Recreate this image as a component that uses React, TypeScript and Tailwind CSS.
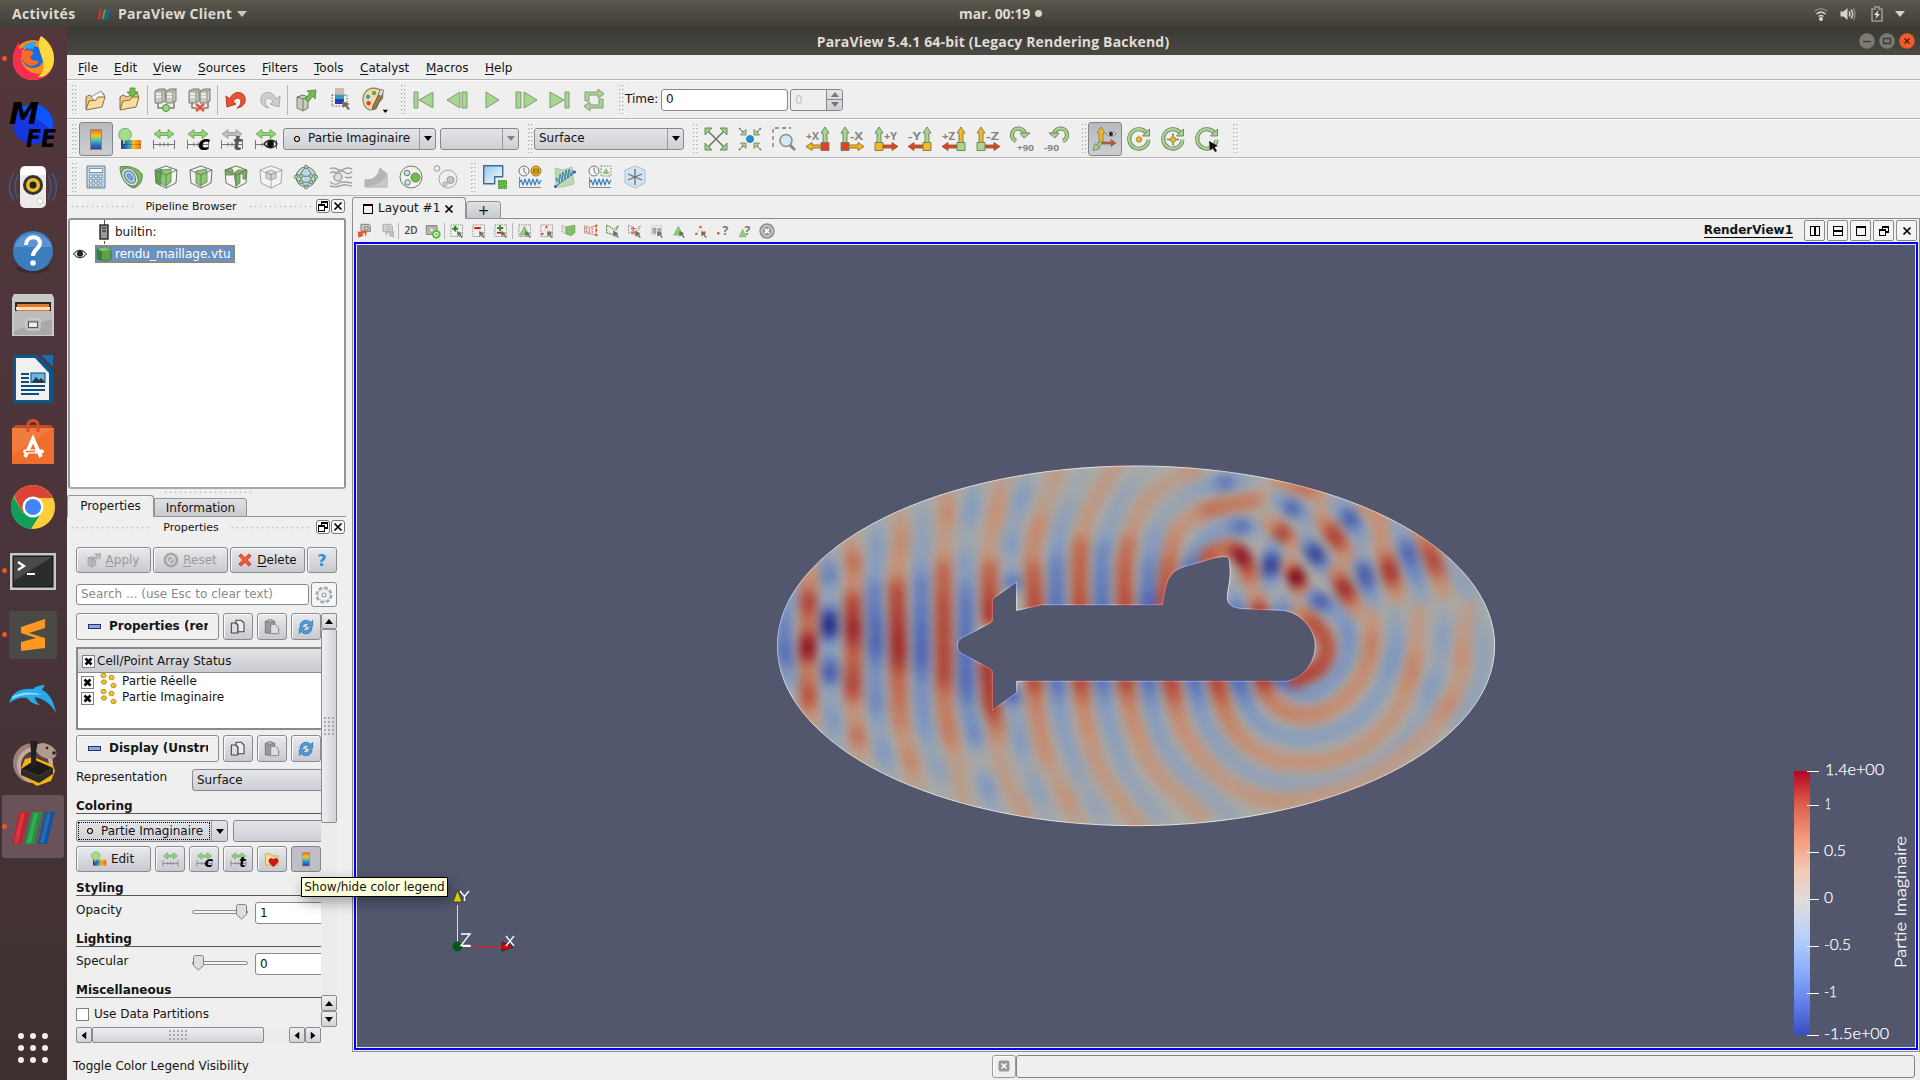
import React from "react";

type Kids = { children?: React.ReactNode };
const G = "#a6d68f";
const D = "#6d7c5c";
const BTN =
  "flex shrink-0 items-center justify-center rounded-[3px] border border-[#8b8c90] bg-linear-to-b from-[#e9eaed] to-[#c9cad1] shadow-[inset_1px_1px_0_#fafafa]";

/* ---------- wave field ---------- */

type Crest = [number, number, number][];

const crests: Crest[] = [
  [[95, 400, -0.2], [80, 470, -0.45], [72, 540, -0.6], [74, 610, -0.7], [90, 690, -0.4]],
  [[160, 340, 0.2], [148, 400, 0.5], [145, 455, 0.85], [145, 520, 0.6], [143, 595, 1.15], [143, 660, 0.55], [145, 740, 0.75], [155, 810, 0.3]],
  [[205, 290, -0.1], [208, 375, -0.6], [211, 440, -0.25], [208, 525, -1.25], [210, 595, -0.35], [210, 668, -0.85], [213, 735, -0.25], [218, 810, -0.45], [228, 880, -0.15]],
  [[268, 250, 0.1], [280, 330, 0.6], [280, 400, 0.45], [278, 460, 0.8], [280, 540, 1], [280, 620, 0.7], [278, 710, 0.82], [284, 790, 0.35], [292, 860, 0.6], [308, 930, 0.15]],
  [[348, 200, -0.1], [352, 290, -0.4], [345, 360, -0.35], [342, 430, -0.6], [347, 570, -0.75], [345, 680, -0.5], [348, 760, -0.55], [358, 840, -0.25], [370, 905, -0.45], [390, 980, -0.1]],
  [[418, 170, 0.1], [424, 265, 0.45], [412, 350, 0.4], [411, 440, 0.8], [415, 595, 0.98], [415, 700, 0.65], [420, 800, 0.55], [434, 870, 0.35], [450, 930, 0.5], [475, 1010, 0.15]],
  [[482, 150, -0.1], [490, 230, -0.25], [484, 310, -0.3], [483, 420, -0.6], [484, 600, -0.75], [486, 730, -0.5], [494, 830, -0.45], [514, 900, -0.2], [532, 950, -0.3], [560, 1030, -0.05]],
  [[560, 120, 0.2], [560, 190, 0.45], [552, 270, 0.25], [550, 380, 0.68], [550, 500, 0.78], [552, 660, 0.82], [554, 760, 0.55], [568, 850, 0.55], [590, 930, 0.25], [605, 1020, 0.22], [620, 1080, 0.2]],
  [[645, 90, -0.1], [634, 175, -0.4], [618, 265, -0.12], [618, 350, -0.4], [618, 480, -0.65], [618, 690, -0.72], [628, 790, -0.5], [645, 860, -0.55], [655, 930, -0.05], [680, 1012, -0.45], [705, 1080, -0.15]],
  [[730, 80, 0.2], [708, 190, 0.4], [690, 280, 0.25], [688, 380, 0.7], [690, 500, 0.9]],
  [[682, 650, 0.9], [694, 770, 0.85], [710, 825, 0.6], [715, 910, 0.25], [745, 1000, 0.25], [790, 1090, 0.3]],
  [[805, 70, -0.1], [787, 145, -0.4], [762, 220, -0.2], [752, 285, -0.4], [752, 340, -0.15], [757, 400, -0.7]],
  [[755, 735, -0.8], [766, 790, -0.3], [780, 875, -0.4], [800, 950, -0.15], [830, 1018, -0.3], [870, 1100, -0.1]],
  [[888, 70, 0.25], [860, 150, 0.18], [836, 225, 0.45], [818, 300, 0.45], [820, 380, 0.7], [826, 480, 0.8]],
  [[822, 680, 0.85], [829, 780, 0.5], [855, 905, 0.42], [885, 980, 0.2], [918, 1040, 0.38], [950, 1110, 0.2]],
  [[985, 50, -0.05], [950, 120, -0.1], [920, 185, -0.25], [895, 260, -0.35], [889, 360, -0.6], [890, 480, -0.7]],
  [[890, 680, -0.7], [905, 820, -0.35], [940, 930, -0.28], [975, 1010, -0.15], [1010, 1070, -0.25], [1035, 1120, -0.1]],
  [[1070, 40, 0.25], [1010, 140, 0.28], [975, 220, 0.3], [960, 300, 0.65], [958, 400, 0.7], [960, 480, 0.8]],
  [[960, 680, 0.85], [975, 800, 0.45], [1005, 920, 0.33], [1050, 1010, 0.28], [1100, 1080, 0.28], [1140, 1130, 0.28]],
  [[1165, 50, -0.05], [1090, 140, -0.2], [1052, 230, -0.26], [1028, 310, -0.55], [1025, 480, -0.7]],
  [[1025, 680, -0.7], [1045, 810, -0.35], [1080, 920, -0.26], [1125, 1010, -0.2], [1190, 1090, -0.2]],
  [[1300, 62, 0.35], [1240, 90, 0.2], [1175, 135, 0.28], [1125, 215, 0.3], [1100, 300, 0.62], [1093, 380, 0.7], [1095, 480, 0.8]],
  [[1095, 680, 0.85], [1115, 800, 0.45], [1165, 930, 0.33], [1240, 1020, 0.28], [1320, 1090, 0.28]],
  [[1163, 480, -0.8], [1165, 380, -0.6], [1180, 270, -0.4], [1210, 200, -0.16], [1260, 150, -0.18], [1330, 110, -0.3], [1397, 97, -0.65], [1460, 90, -0.2]],
  [[1163, 680, -0.7], [1190, 830, -0.35], [1250, 940, -0.26], [1330, 1020, -0.22], [1410, 1090, -0.2]],
  [[1215, 460, 0.8], [1222, 380, 0.7], [1240, 270, 0.48], [1280, 210, 0.3], [1350, 178, 0.6], [1420, 162, 0.55], [1490, 150, 0.52], [1520, 130, 0.1]],
  [[1230, 680, 0.85], [1265, 830, 0.42], [1340, 940, 0.33], [1420, 1010, 0.28], [1530, 1052, 0.35], [1660, 1040, 0.28], [1790, 1000, 0.25], [1920, 920, 0.26], [2010, 840, 0.26], [2060, 770, 0.45], [2100, 690, 0.28], [2106, 620, 0.42], [2112, 540, 0.25], [2125, 470, 0.2]],
  [[1290, 360, -0.7], [1320, 280, -0.4], [1380, 238, -0.4], [1450, 228, -0.7], [1485, 240, -0.3]],
  [[1300, 680, -0.7], [1340, 830, -0.36], [1420, 930, -0.26], [1510, 985, -0.24], [1640, 1005, -0.24], [1780, 975, -0.2], [1910, 900, -0.25], [1980, 800, -0.2], [2015, 710, -0.4], [2040, 640, -0.2], [2045, 560, -0.35], [2050, 470, -0.1]],
  [[1335, 330, 0.75], [1390, 290, 0.6], [1448, 318, 1.15], [1465, 370, 0.7], [1482, 420, 0.3], [1500, 490, 0.95]],
  [[1367, 680, 0.85], [1410, 820, 0.48], [1500, 910, 0.38], [1630, 940, 0.36], [1780, 905, 0.33], [1900, 800, 0.33], [1960, 650, 0.5], [1968, 570, 0.28], [1975, 490, 0.26]],
  [[1425, 420, -0.2], [1428, 480, -0.7]],
  [[1432, 680, -0.75], [1480, 800, -0.42], [1550, 850, -0.35], [1633, 865, -0.33], [1760, 830, -0.33], [1850, 740, -0.33], [1903, 610, -0.45], [1905, 500, -0.22]],
  [[1500, 670, 0.95], [1540, 760, 0.52], [1633, 798, 0.48], [1730, 765, 0.43], [1805, 680, 0.43], [1835, 580, 0.52], [1832, 490, 0.28]],
  [[1560, 490, -0.6], [1572, 465, -0.5]],
  [[1560, 680, -0.75], [1633, 735, -0.45], [1710, 700, -0.42], [1760, 620, -0.45], [1765, 550, -0.5], [1735, 490, -0.4], [1677, 452, -0.8], [1645, 430, -0.4]],
  [[1590, 470, 0.3], [1660, 520, 0.75], [1698, 570, 0.75], [1698, 620, 0.75], [1670, 660, 0.82], [1600, 690, 0.82]],
  [[1542, 290, -0.4], [1532, 345, -1.1], [1528, 400, -0.4]],
  [[1560, 150, -0.4], [1595, 173, -0.75], [1640, 205, -0.35]],
  [[1635, 270, -0.4], [1665, 312, -1.05], [1700, 360, -0.4]],
  [[1730, 160, -0.3], [1770, 205, -0.8], [1805, 260, -0.35]],
  [[1795, 310, -0.3], [1815, 375, -0.85], [1840, 450, -0.35]],
  [[1915, 230, -0.25], [1945, 310, -0.75], [1965, 370, -0.55], [1985, 440, -0.25]],
  [[2070, 350, -0.25], [2110, 400, -0.3], [2150, 450, -0.15]],
  [[2150, 480, -0.12], [2170, 600, -0.25], [2160, 700, -0.25], [2100, 810, -0.22]],
  [[1530, 220, 0.4], [1567, 248, 0.85], [1600, 280, 0.4]],
  [[1590, 345, 0.5], [1609, 382, 1.5], [1625, 420, 0.5]],
  [[1680, 200, 0.4], [1725, 260, 0.85], [1765, 320, 0.4]],
  [[1725, 360, 0.45], [1752, 415, 0.98], [1790, 480, 0.4]],
  [[1560, 90, 0.4], [1640, 115, 0.6], [1700, 150, 0.2]],
  [[1820, 165, 0.45], [1855, 205, 0.4], [1865, 280, 0.4], [1890, 365, 0.92], [1910, 430, 0.45]],
  [[1980, 240, 0.45], [2020, 330, 0.8], [2050, 420, 0.35]],
];

const stops: [number, number[]][] = [
  [-1, [38, 50, 140]],
  [-0.6, [80, 106, 184]],
  [-0.3, [130, 154, 192]],
  [0, [171, 171, 166]],
  [0.3, [198, 143, 116]],
  [0.6, [190, 88, 62]],
  [1, [140, 8, 26]],
];

function shade(v: number) {
  const m = Math.abs(v);
  const gain = m < 0.5 ? 0.74 : Math.min(0.87, 0.74 + (m - 0.5) * 0.5);
  const a = Math.max(-1.1, Math.min(1.1, v * gain));
  let i = 0;
  while (i < stops.length - 2 && a > stops[i + 1][0]) i++;
  const [p, c] = stops[i];
  const [q, d] = stops[i + 1];
  const t = (a - p) / (q - p);
  return `rgb(${c.map((n, k) => Math.max(0, Math.round(n + (d[k] - n) * t))).join(",")})`;
}

/* Each crest fades out past both of its ends. */
function withTails(c: Crest): Crest {
  const tail = (a: number[], b: number[]): [number, number, number] => {
    const l = Math.hypot(a[0] - b[0], a[1] - b[1]) || 1;
    return [a[0] + ((a[0] - b[0]) / l) * 38, a[1] + ((a[1] - b[1]) / l) * 38, a[2] * 0.15];
  };
  return [tail(c[0], c[1]), ...c, tail(c[c.length - 1], c[c.length - 2])];
}

function sample(c: Crest) {
  const out: number[][] = [];
  for (let i = 0; i < c.length - 1; i++) {
    const p0 = c[Math.max(0, i - 1)], p1 = c[i], p2 = c[i + 1], p3 = c[Math.min(c.length - 1, i + 2)];
    const n = Math.max(3, Math.round(Math.hypot(p2[0] - p1[0], p2[1] - p1[1]) / 9));
    for (let s = 0; s < n; s++) {
      const t = s / n;
      const cr = [0, 1].map(
        (k) => 0.5 * (2 * p1[k] + (p2[k] - p0[k]) * t + (2 * p0[k] - 5 * p1[k] + 4 * p2[k] - p3[k]) * t * t + (3 * p1[k] - p0[k] - 3 * p2[k] + p3[k]) * t * t * t),
      );
      const e = (1 - Math.cos(Math.PI * t)) / 2;
      out.push([cr[0], cr[1], p1[2] + (p2[2] - p1[2]) * e]);
    }
  }
  out.push([...c[c.length - 1]]);
  return out;
}

const segments = crests
  .flatMap((c) => {
    const p = sample(withTails(c));
    return p.slice(1).map((q, i) => ({ d: `M${p[i][0].toFixed(1)} ${p[i][1].toFixed(1)}L${q[0].toFixed(1)} ${q[1].toFixed(1)}`, a: (p[i][2] + q[2]) / 2 }));
  })
  .sort((m, n) => Math.abs(m.a) - Math.abs(n.a));

const HULL =
  "M592 587C593 572 598 567 612 560L645 543L690 519L697 513V447L770 395V481L845 464H1207C1212 430 1217 400 1228 382C1240 362 1255 355 1285 346C1330 336 1365 317 1402 320C1410 325 1410 350 1411 370C1410 400 1402 420 1402 445C1403 465 1420 474 1450 476L1570 481C1625 488 1666 540 1666 587C1666 640 1625 690 1575 694H770V728L697 781V663L690 656L645 632L612 614C598 607 593 602 592 587Z";

function Field() {
  return (
    <g transform="translate(760 450) scale(.33333)">
      <defs>
        <filter id="soft" x="0" y="0" width="2280" height="1170" filterUnits="userSpaceOnUse" colorInterpolationFilters="sRGB">
          <feGaussianBlur stdDeviation="15" />
        </filter>
        <filter id="lift" x="0" y="0" width="2280" height="1170" filterUnits="userSpaceOnUse" colorInterpolationFilters="sRGB">
          <feColorMatrix values="1.3 0 0 0 .02 0 1.3 0 0 .02 0 0 1.3 0 .05 0 0 0 1 0" />
        </filter>
        <clipPath id="ell"><ellipse cx="1128" cy="587.5" rx="1076" ry="539.5" /></clipPath>
        <mask id="rim" maskUnits="userSpaceOnUse" x="0" y="0" width="2280" height="1170">
          <g fill="none" stroke="#fff" strokeWidth="3"><ellipse cx="1128" cy="587.5" rx="1076" ry="539.5" /><path d={HULL} /></g>
        </mask>
        <g id="waves">
          <g filter="url(#soft)">
            <rect x="-40" y="-40" width="2360" height="1250" fill="#ababa6" />
            <g fill="none" strokeWidth="52">
              {segments.map((s, i) => <path key={i} d={s.d} stroke={shade(s.a)} />)}
            </g>
          </g>
        </g>
      </defs>
      <g clipPath="url(#ell)"><use href="#waves" /></g>
      <path d={HULL} fill="#52576e" />
      <g mask="url(#rim)"><g filter="url(#lift)"><use href="#waves" /></g></g>
    </g>
  );
}

const ticks: [number, number, string][] = [
  [771, 1825, "1.4e+00"], [805, 1825, "1"], [852, 1824, "0.5"], [899, 1824, "0"], [946, 1824, "-0.5"], [993, 1824, "-1"], [1035, 1824, "-1.5e+00"],
];
const tickLen = [59, 6, 22, 9, 27, 13, 65];

function Viewport() {
  return (
    <svg viewBox="357 245 1558 802" className="block h-[802px] w-[1558px] bg-[#52576e]">
      <Field />
      <g>
        <path d="M457.500 942V905" stroke="#f5f520" strokeWidth="1" />
        <path d="M457.500 890L462 902H453Z" fill="#d8d800" stroke="#222" strokeWidth=".7" />
        <path d="M462 946.500H503" stroke="#ff1010" />
        <path d="M462 946.500H471" stroke="#fff" />
        <path d="M502 942L514 946.500L502 951Z" fill="#e00000" stroke="#222" strokeWidth=".8" />
        <circle cx="457.500" cy="946.500" r="5" fill="#005a10" />
        <g fill="none" stroke="#fff" strokeWidth="1.400">
          <path d="M460 891L464.500 896.500L469 891M464.500 896.500V901" />
          <path d="M461 934H470L461 945.500H470.500" />
          <path d="M506 936L514 946M514 936L506 946" />
        </g>
      </g>
      <defs>
        <linearGradient id="cw" x1="0" y1="0" x2="0" y2="1">
          <stop offset="0" stopColor="#b40426" /><stop offset=".125" stopColor="#dc5d4a" /><stop offset=".25" stopColor="#f4987a" />
          <stop offset=".375" stopColor="#f2cab5" /><stop offset=".5" stopColor="#dcdddd" /><stop offset=".625" stopColor="#b8d0f9" />
          <stop offset=".75" stopColor="#8db0fe" /><stop offset=".875" stopColor="#6282ea" /><stop offset="1" stopColor="#3b4cc0" />
        </linearGradient>
      </defs>
      <rect x="1794" y="771" width="16" height="264" fill="url(#cw)" />
      <g fill="#fff" stroke="#fff" strokeWidth=".25" fontFamily="Lato, sans-serif" fontSize="16" fontWeight="300">
        {ticks.map(([y, x, t], i) => (
          <g key={t}>
            <rect x="1807" y={y} width="12" height="1" stroke="none" />
            <text x={x} y={y + 4} textLength={tickLen[i]} lengthAdjust="spacingAndGlyphs">{t}</text>
          </g>
        ))}
        <text transform="translate(1906 968) rotate(-90)" fontSize="16.500" textLength="132" lengthAdjust="spacingAndGlyphs">Partie Imaginaire</text>
      </g>
    </svg>
  );
}

/* ---------- icons ---------- */

function Svg({ s = 24, children }: Kids & { s?: number }) {
  return (
    <svg width={s} height={s} viewBox="0 0 24 24" fill="none" strokeLinejoin="round" className="block shrink-0 overflow-visible">
      {children}
    </svg>
  );
}

const Folder = ({ save }: { save?: boolean }) => (
  <Svg>
    <path d="M2 21V9l3-2 4 2 8-4 3 1v4z" fill="#e8c987" stroke="#8a6d3b" />
    {!save && <path d="M7 9l10-6 4 6-9 5z" fill="#fafafa" stroke="#777" strokeWidth=".8" />}
    <path d="M2 22l3-9 7-1 2-3h7l-3 10z" fill="#f8dca0" stroke="#8a6d3b" />
    {save && <path d="M12 0h5v4h3l-5.500 5L9 4h3z" fill="#6cc04a" stroke="#4d8a35" strokeWidth=".8" />}
  </Svg>
);
const Server = ({ off }: { off?: boolean }) => (
  <Svg>
    <path d="M4 13v7h5M20 13v7h-5" stroke="#7d8070" strokeWidth="1.500" />
    {[1, 12].map((x) => (
      <g key={x}>
        <path d={`M${x} 3l4-2h6v12l-4 2H${x}z`} fill="#c9c9c4" stroke="#77786c" />
        <path d={`M${x} 3h7v12M${x + 7} 3l4-2`} stroke="#8d8e84" strokeWidth=".8" />
        <path d={`M${x + 1} 6h5M${x + 1} 9h5`} stroke="#f4f4f0" strokeWidth="1.400" />
      </g>
    ))}
    {off ? <path d="M8 16l8 7M16 16l-8 7" stroke="#e2553f" strokeWidth="2.600" /> : <circle cx="12" cy="20" r="3.500" fill="#8fdc78" stroke="#5c8a4a" />}
  </Svg>
);
const Undo = ({ redo }: { redo?: boolean }) => (
  <Svg>
    <path
      transform={redo ? "translate(24 0) scale(-1 1)" : ""}
      d="M2 8l1 11 9-3-3-2c2-5 7-5 8-1 0 3-1 5-4 7 6-1 9-5 8-10C20 3 9 2 6 11z"
      fill={redo ? "#cfcfcf" : "#ee5030"} stroke={redo ? "#aaa" : "#b43a20"}
    />
  </Svg>
);
const Cube = ({ fill, grey, kind = 0 }: { fill?: string; grey?: boolean; kind?: number }) => {
  const k = grey ? "#a4a4a4" : "#6a7860";
  return (
    <Svg>
      <path d="M1 5l11-4 11 4-1 13-10 5-10-5z" stroke={k} fill="#f4f4f2" />
      {kind === 0 && <path d="M2 6l6-2v14l-2 2-4-2z" fill={fill} stroke={k} strokeWidth=".8" />}
      {kind === 0 && <path d="M8 5l9-1v13l-5 4-6-3z" fill="#8cc873" stroke={k} strokeWidth=".8" />}
      {kind === 1 && <path d="M7 6l10-2 1 3v10l-7 4-4-3z" fill={fill} stroke={k} strokeWidth=".8" />}
      {kind === 2 && <path d="M10 8l4-3h8v9h-3V9h-3v9l-4 3z M2 5l5-2 2 2v5H2z" fill={fill} stroke={k} strokeWidth=".8" />}
      {kind === 3 && <path d="M7 7l5-2 5 2v6l-5 2-5-2z M7 7l5 2 5-2M12 9v6" fill={fill} stroke={k} />}
      <path d="M1 5l11 5 11-5M12 10v13" stroke={k} strokeWidth=".9" />
    </Svg>
  );
};
const ExtractSel = ({ grey, s = 24 }: { grey?: boolean; s?: number }) => (
  <Svg s={s}>
    <path d="M3 9l6-2 5 2v11l-5 3-6-3z" fill={grey ? "#bbb" : "#c6cdbf"} stroke={grey ? "#999" : D} />
    <path d="M3 9l6 2 5-2M9 11v11" stroke={grey ? "#999" : D} />
    <path d="M11 11l5-6-3-2 9-1-1 9-2-3-5 6z" fill={grey ? "#bbb" : "#6cc04a"} stroke={grey ? "#999" : "#4f8040"} strokeWidth=".8" />
  </Svg>
);
const Rainbow = () => (
  <defs>
    <linearGradient id="rbv" x1="0" y1="0" x2="0" y2="1"><stop offset="0" stopColor="#f06a20" /><stop offset=".3" stopColor="#f9c31f" /><stop offset=".5" stopColor="#62c7a8" /><stop offset=".75" stopColor="#1e7ed0" /><stop offset="1" stopColor="#4a2a8a" /></linearGradient>
    <linearGradient id="rbh" x1="0" y1="0" x2="1" y2="0"><stop offset="0" stopColor="#4a2a8a" /><stop offset=".35" stopColor="#1e8ed8" /><stop offset=".6" stopColor="#f9c31f" /><stop offset="1" stopColor="#f0701c" /></linearGradient>
    <linearGradient id="sky" x1="0" y1="0" x2="1" y2="1"><stop offset="0" stopColor="#8fc4e8" /><stop offset="1" stopColor="#fff" /></linearGradient>
  </defs>
);
const LoadColor = () => (
  <Svg>
    <path d="M7 0h9v7H7z" fill="#c9bdb0" />
    <rect x="4" y="7" width="15" height="11" stroke="#555" strokeDasharray="1.500 1.500" />
    <rect x="7" y="7" width="9" height="9" fill="#2aa0c8" /><rect x="7" y="11" width="9" height="5" fill="#2a3aa8" />
    <path d="M14 13l8 3-3 1 3 4-2 1-3-4-2 2z" fill="#6b705c" />
  </Svg>
);
const Palette = () => (
  <Svg s={26}>
    <path d="M12 1C4 1 1 8 2 14c1 5 5 8 8 7 2-1 0-5 3-6 4-1 8-3 7-8-1-4-4-6-8-6z" fill="#f5d9a8" stroke="#8a7a55" />
    <circle cx="6.500" cy="9" r="2" fill="#2e9be0" /><circle cx="12" cy="5.500" r="2" fill="#5fae3c" /><circle cx="7" cy="15" r="2" fill="#e23b2a" />
    <path d="M11 18l6-13 3-2v4l-6 13-3 1z" fill="#a0784a" stroke="#555" strokeWidth=".8" />
    <path d="M16 7l2-5 3 1-2 6z" fill="#ddd" stroke="#666" strokeWidth=".7" />
    <path d="M20 21h5l-2.500 3z" fill="#000" />
  </Svg>
);
const Play = ({ k }: { k: number }) => (
  <Svg>
    <g fill={G} stroke="#849a74">
      {k === 0 && <path d="M2 4h4v16H2zM21 4v16L7 12z" />}
      {k === 1 && <path d="M14 4v16L1 12zM16 4h5v16h-5z" />}
      {k === 2 && <path d="M6 4l13 8-13 8z" />}
      {k === 3 && <path d="M10 4v16l13-8zM2 4h5v16H2z" />}
      {k === 4 && <path d="M2 4v16l14-8zM17 4h4v16h-4z" />}
      {k === 5 && <path d="M3 13V4h13V1l6 5-6 4V7H7v6zM21 11v9H8v3l-6-5 6-4v3h9v-6z" />}
    </g>
  </Svg>
);
const Legend = ({ s = 24 }: { s?: number }) => (
  <Svg s={s}><rect x="6.500" y="2.500" width="11" height="20" fill="url(#rbv)" stroke="#8a8a8a" /></Svg>
);
const EditMap = ({ s = 24 }: { s?: number }) => (
  <Svg s={s}>
    <rect x="3" y="13" width="20" height="9" fill="url(#rbh)" /><circle cx="7" cy="7.500" r="6.300" fill="#a3dc8c" stroke="#7aa868" /><path d="M6 13v4" stroke="#8fc27a" strokeWidth="2" />
    <path d="M3 17.500h20M13 13v9" stroke="#0003" />
  </Svg>
);
const Rescale = ({ k, s = 24, grey }: { k: string; s?: number; grey?: boolean }) => (
  <Svg s={s}>
    <path d="M1 17.500h22M1.500 13v9M22.500 13v9M8 15.500v4M12 15.500v4M16 15.500v4" stroke="#777" />
    <path d="M2 7l6-4.500v3h8v-3L22 7l-6 4.500v-3H8v3z" fill={grey ? "#bdbdbd" : "#8fd674"} stroke={grey ? "#999" : "#6d9a58"} strokeWidth=".8" />
    {(k === "c" || k === "t") && (
      <text x={k === "c" ? 12 : 13} y="22.500" fontSize="20" fontWeight="bold" fontStyle="italic" fontFamily="DejaVu Sans, sans-serif" fill={grey ? "#555" : "#000"} textLength={k === "c" ? 12 : 9} lengthAdjust="spacingAndGlyphs">{k}</text>
    )}
    {k === "e" && <g><path d="M10 17c4-5 10-5 13 0-3 5-9 5-13 0z" fill="#eee" stroke="#222" strokeWidth="1.400" /><circle cx="16.500" cy="17" r="3.400" fill="#111" /></g>}
  </Svg>
);
const Calc = () => (
  <Svg>
    <rect x="3" y="1" width="18" height="22" fill="#b9d8ee" stroke="#6d8190" /><rect x="5.500" y="3.500" width="13" height="4" fill="#fff" stroke="#6d8190" strokeWidth=".8" />
    {[10, 14.500, 19].map((y) => [5.500, 10.300, 15].map((x) => <rect key={`${x}${y}`} x={x} y={y} width="3" height="2.600" fill="#fff" stroke="#6d8190" strokeWidth=".8" />))}
  </Svg>
);
const Contour = () => (
  <Svg>
    <path d="M1 2c8-2 18 1 22 7 1 6-2 12-8 14C8 22 1 12 1 2z" fill="#77c05a" stroke={D} />
    <ellipse cx="11" cy="12" rx="7" ry="10" transform="rotate(-38 11 12)" fill="#d8e8d0" stroke={D} />
    <ellipse cx="11" cy="12" rx="4.600" ry="7" transform="rotate(-38 11 12)" fill="#aacdec" stroke="#56779a" />
    <ellipse cx="11" cy="12" rx="1.800" ry="3.500" transform="rotate(-38 11 12)" fill="#7aa4dc" stroke="#56779a" strokeWidth=".8" />
  </Svg>
);
const Glyph = () => (
  <Svg>
    <circle cx="12" cy="12" r="10" fill="#b9d8f0" stroke={D} />
    <path d="M12 2c-7 6-7 14 0 20 7-6 7-14 0-20M2.500 9c6 3 13 3 19 0M2.500 15c6 3 13 3 19 0" stroke={D} fill="none" />
    {[[12, 2], [2, 12], [22, 12], [12, 22], [7, 11], [17, 11], [7, 17], [17, 17]].map(([x, y]) => <circle key={`${x}-${y}`} cx={x} cy={y} r="1.800" fill={G} stroke={D} strokeWidth=".8" />)}
  </Svg>
);
const Stream = () => (
  <Svg><g stroke="#a3a3a3" strokeWidth="1.500"><path d="M1 4c5-4 8 3 12 1s6-3 10-1M1 8c4-3 6 1 8-1s6-1 8 1 4 0 6-1M1 17c4 3 6 3 9 1s8-1 13 0M1 21c5 2 10 0 13-1s6 1 9 1M16 12c2 1 4 1 7 0" /><circle cx="9" cy="12" r="4" fill="#ddd" /></g></Svg>
);
const Warp = () => <Svg><path d="M1 22v-7c8 0 13-3 15-12l7 6v13z" fill="#c9c9c9" stroke="#b0b0b0" /><path d="M1 15c8 0 13-3 15-12l7 6c-2 6-8 11-22 13z" fill="#b5b5b5" /></Svg>;
const Group = ({ ex }: { ex?: boolean }) => (
  <Svg>
    <circle cx={ex ? 14 : 12} cy={ex ? 14 : 12} r={ex ? 9 : 11} fill={ex ? "#eee" : "#f2f2ee"} stroke={ex ? "#a5a5a5" : D} />
    <circle cx="16.500" cy={ex ? 15 : 12.500} r={ex ? 3.500 : 4.500} fill={ex ? "#c4c4c4" : "#6cc04a"} stroke={ex ? "#999" : D} />
    <circle cx={ex ? 3 : 8} cy={ex ? 3.500 : 8} r="2.800" fill={ex ? "#eee" : "#c5e0f4"} stroke={ex ? "#999" : D} />
    <circle cx={ex ? 11 : 8.500} cy={ex ? 19 : 17.500} r={ex ? 2 : 2.800} fill={ex ? "#ddd" : "#c5e0f4"} stroke={ex ? "#999" : D} />
  </Svg>
);
const SelQuery = () => (
  <Svg><path d="M.7.700h19v11h-8v7h-11z" fill="url(#sky)" stroke="#3f6a94" strokeWidth="1.400" /><rect x="15.500" y="15.500" width="8" height="8" fill="#5cbb3c" stroke="#4b7a3c" strokeDasharray="1.500 1" /></Svg>
);
const Wave = "M1 18l2-3 2 5 2-6 2 6 2-6 2 6 2-6 2 6 2-6 2 5 2-4";
const PlotTime = ({ sel }: { sel?: boolean }) => (
  <Svg>
    <circle cx="6" cy="6" r="5" fill="#f4f8fa" stroke={D} /><path d="M6 2.500V6l2 3" stroke={D} />
    {sel ? <g><rect x="13" y="1" width="10" height="10" stroke={D} strokeDasharray="1.500 1.500" /><path d="M18 3l3.500 6h-7z" fill="#8cc873" /></g> : <g><circle cx="18" cy="6" r="5" fill="#f5b91c" stroke="#8b7430" /><path d="M15.500 4h5v4h-5zM15.500 6h5" stroke="#8b6914" /></g>}
    <path d={Wave} stroke="#3c7fc0" strokeWidth="1.200" /><path d="M1.500 12v10.500H23" stroke="#888" />
  </Svg>
);
const PlotLine = () => <Svg><path d="M2 3l8 2 9-3 2 17-12 3H3z" fill="#b9d9ae" stroke="#b0c8a8" /><path d="M2 22L22 7" stroke="#3c6fb0" /><path d="M3 16l1-3 2 5 1-9 2 7 1-9 2 7 1-9 2 8 1-9 2 7 2-6" stroke="#3c7fc0" /><circle cx="2.500" cy="21.500" r="1.500" fill="#2860a8" /><circle cx="21.500" cy="7" r="1.500" fill="#2860a8" /></Svg>;
const Probe = () => <Svg><path d="M2 5l10-4 10 4v13l-10 5-10-5z" fill="#d3e3f1" stroke="#a9c0d4" /><path d="M12 4v16M5 9l14 6M19 9L5 15" stroke="#6a6f72" strokeWidth="1.300" /></Svg>;

const ResetCam = () => (
  <Svg><path d="M4 4l16 16M20 4L4 20" stroke="#707a5c" strokeWidth="1.600" /><path d="M1 1h7l-7 7zM23 1v7l-7-7zM1 23v-7l7 7zM23 23h-7l7-7z" fill="#8fd674" stroke={D} strokeWidth=".9" /></Svg>
);
const ZoomData = () => (
  <Svg><path d="M1 1l5 5M23 1l-5 5M1 23l5-5M23 23l-5-5" stroke={D} strokeWidth="1.600" strokeDasharray="2.500 1" /><path d="M8 8H2.500L8 2.500zM16 8V2.500L21.500 8zM8 16v5.500L2.500 16zM16 16h5.500L16 21.500z" fill="#a5dc8c" stroke={D} strokeWidth=".8" /><circle cx="12" cy="12" r="3.500" fill="#1e8fd8" stroke="#1a6aa5" strokeWidth=".7" /></Svg>
);
const ZoomBox = () => (
  <Svg><path d="M1 20V1h18" stroke="#777" strokeDasharray="4 3" strokeWidth="1.300" /><path d="M18 18l5 5" stroke="#888" strokeWidth="3" /><circle cx="14" cy="13.500" r="6" fill="#cfeafa" stroke="#8d8f92" strokeWidth="1.600" /></Svg>
);
const AxisView = ({ t, up, side }: { t: string; up: string; side: string }) => {
  const r = t[0] === "+" ? t !== "+Y" : t === "-Y";
  const sq = t[1] === "X" ? "#e23f2c" : t[1] === "Y" ? "#f5b91c" : G;
  return (
    <Svg>
      <g transform={r ? "translate(24 0) scale(-1 1)" : ""} strokeWidth=".9">
        <path d="M3 17V6H1l4-6 4 6H7v11z" fill={up} stroke={D} />
        <path d="M8 18h10v-2.500l6 4-6 4V21H8z" fill={side} stroke={side === G ? D : "#8c6a2a"} />
        <rect x="1" y="15.500" width="8" height="8" fill={sq} stroke={D} />
      </g>
      <text x={r ? 0 : 10} y="12.500" fontSize="11" fontWeight="bold" fill="#858585" fontFamily="Open Sans, sans-serif" textLength="13" lengthAdjust="spacingAndGlyphs">{t}</text>
    </Svg>
  );
};
const Rot = ({ t }: { t: string }) => {
  const neg = t[0] === "-";
  return (
    <Svg>
      <g transform={neg ? "translate(25 0) scale(-1 1)" : ""}>
        <path d="M6 14a6.500 6.500 0 1 1 9-6" stroke={D} strokeWidth="4.200" /><path d="M6 14a6.500 6.500 0 1 1 9-6" stroke={G} strokeWidth="2.400" /><path d="M10 6h10l-6 5z" fill={G} stroke={D} strokeWidth=".9" />
      </g>
      <text x={neg ? 0 : 7} y="24" fontSize="9" fontWeight="bold" fill="#858585" fontFamily="Open Sans, sans-serif" textLength={neg ? 15 : 17} lengthAdjust="spacingAndGlyphs">{t}</text>
    </Svg>
  );
};
const Orient = () => (
  <Svg>
    <path d="M8 15L2 22" stroke={D} strokeWidth="4" /><path d="M8 15L3 21" stroke={G} strokeWidth="2.500" /><path d="M0 23.500l2-7 5 5z" fill={G} stroke={D} strokeWidth=".8" />
    <path d="M6 15V6H4l4-6 4 6h-2v9z" fill="#f5b91c" stroke={D} strokeWidth=".8" /><path d="M9 15h9v-2.500l5 3.500-5 3.500V17H9z" fill="#e23f2c" stroke={D} strokeWidth=".8" />
    <path d="M13 7c3-3 7-3 10 0-3 3-7 3-10 0z" fill="#ddd" stroke="#777" strokeWidth=".8" /><circle cx="18" cy="7" r="2" fill="#222" />
  </Svg>
);
const Center = ({ k }: { k: number }) => (
  <Svg>
    <path d="M19.500 6A9.700 9.700 0 1 0 21.500 13" stroke={D} strokeWidth="4" /><path d="M19.500 6A9.700 9.700 0 1 0 21.500 12" stroke={G} strokeWidth="2.400" /><path d="M22.500 2v7h-7z" fill={G} stroke={D} strokeWidth=".9" />
    {k < 2 && <circle cx="12" cy="12.500" r="2.700" fill="#f5b91c" stroke="#a8842a" />}
    {k === 1 && <path d="M12 6.500v3M12 15.500v3M6 12.500h3M15 12.500h3" stroke={D} strokeWidth="1.500" />}
    {k === 2 && <path d="M14 14l9 5-3.500 1 2.500 4-2 1-2.500-4-2.500 2.500z" fill="#111" />}
  </Svg>
);

/* small selection icons of the view toolbar */
const Cursor = () => <path d="M12 12l9 4-3 1.500 4 5-2 1.500-4-5-3 3z" fill="#6c735c" />;
const Small = ({ k }: { k: string }) => (
  <Svg s={14}>
    {["plus", "minus", "pm", "cell", "pt"].includes(k) && <rect x="1.500" y="1.500" width="20" height="20" stroke="#777" strokeWidth="1.600" strokeDasharray="2 2" />}
    {k === "plus" && <path d="M4 8h10M9 3v10" stroke="#1c8a1c" strokeWidth="3.500" />}
    {k === "minus" && <path d="M4 7h11" stroke="#e01010" strokeWidth="3.500" />}
    {k === "pm" && <g><path d="M5 7h11M10.500 2v10" stroke="#1c8a1c" strokeWidth="3" /><path d="M5 15h11" stroke="#e01010" strokeWidth="3" /></g>}
    {(k === "cell" || k === "tri") && <path d="M11 4l8 15H3z" fill="#8fd074" stroke="#6da055" />}
    {(k === "pt" || k === "dots") && <g><path d="M4 18L11 5l6 9" stroke="#bbb" /><g fill="#e8482c"><circle cx="11" cy="5" r="2" /><circle cx="4" cy="17" r="2" /><circle cx="18" cy="14" r="1.600" /></g></g>}
    {k === "blk" && <g><path d="M0 3l7 2v12l-7-3z" fill="#dfe6da" stroke={D} strokeDasharray="3 1.500" /><path d="M7 5l15-3v13l-6 5-9-3z" fill="#7cc45e" stroke={D} /></g>}
    {k === "fr" && <g><path d="M1 3l8 3 12-3v16l-10-2-10-2z" stroke="#a8907c" strokeWidth="1.500" /><path d="M4 6v10M9 8v8M14 7v9" stroke="#e8482c" strokeWidth="2" strokeDasharray="3 2" /><g fill="#e8482c"><circle cx="21" cy="3" r="2" /><circle cx="21" cy="11" r="2" /><circle cx="21" cy="19" r="2" /></g></g>}
    {k === "pc" && <path d="M1 2l7 3 5 5 8-7-2 6-5 4 6 4-3 4-6-3-10-3z" stroke="#4a7a44" strokeWidth="1.600" fill="#e2ecdc" strokeDasharray="4 1" />}
    {k === "pp" && <g><path d="M1 2l7 3 5 5 8-7-2 6-5 4 6 4-3 4-6-3-10-3z" stroke="#6c735c" strokeWidth="1.400" strokeDasharray="3 2" /><path d="M5 8h7M5 14h8M9 5v12" stroke="#e8482c" strokeWidth="2.200" strokeDasharray="3 1.500" /></g>}
    {k === "blks" && <g><rect x="2" y="3" width="18" height="16" stroke="#aaa" strokeWidth="1.400" strokeDasharray="2 2" /><path d="M5 7h5v9H5zM12 9l6-2v8z" fill="#9fae94" stroke="#8a9a80" /></g>}
    {k === "q1" && <circle cx="4" cy="16" r="2.200" fill="#e8482c" />}
    {k === "q2" && <path d="M8 9l6 13H2z" fill="#8fd074" stroke="#6da055" />}
    {(k === "q1" || k === "q2") && <text x={11} y="18" fontSize="21" fontWeight="bold" fill="#7c7c68" fontFamily="Open Sans, sans-serif">?</text>}
    {k !== "q1" && k !== "q2" && k !== "blk" && k !== "fr" && <Cursor />}
  </Svg>
);
const CamUndo = ({ grey }: { grey?: boolean }) => (
  <Svg s={16}><path d="M6 2h12l2 3v8H6z" fill={grey ? "#d5d5d5" : "#c7cbbd"} stroke={grey ? "#aaa" : "#7d8170"} strokeWidth="1.500" /><circle cx="14" cy="8" r="3" stroke={grey ? "#aaa" : "#7d8170"} strokeWidth="1.500" /><path transform={grey ? "translate(24 0) scale(-1 1)" : ""} d="M1 12l1 10 8-3-2-2c3-4 5-1 4 4 4-4 3-10-1-10-3 0-5 1-6 3z" fill={grey ? "#bbb" : "#e6553a"} /></Svg>
);
const CamAdj = () => <Svg s={16}><path d="M2 4h16v13H2z" fill="#b9bdae" stroke="#7d8170" strokeWidth="1.500" /><circle cx="10" cy="10" r="4" fill="#ddd" stroke="#7d8170" /><circle cx="17" cy="17" r="5" fill="#fff" stroke="#5cbb3c" strokeWidth="3" /><path d="M17 15v4M15 17h4" stroke="#5cbb3c" strokeWidth="1.500" /></Svg>;

/* panel glyphs */
const WinGlyph = ({ k }: { k: string }) => (
  <svg width="10" height="10" viewBox="0 0 10 10" fill="none" stroke="#000" shapeRendering="crispEdges" className="block">
    {k === "x" && <path d="M1.500 1.500l7 7M8.500 1.500l-7 7" strokeWidth="1.700" shapeRendering="auto" />}
    {k === "v" && <path d="M.5.500h9v9h-9zM5 .5v9" strokeWidth="1.200" />}
    {k === "h" && <path d="M.5.500h9v9h-9zM.5 5h9" strokeWidth="1.200" />}
    {k === "max" && <path d="M.5 1v8.500h9V1M0 1h10" strokeWidth="1.500" />}
    {k === "r" && <path d="M3.500 3V.8h6v5H7M.5 4h6v5.500h-6z" strokeWidth="1.400" />}
  </svg>
);
const WinBtn = ({ k, big }: { k: string; big?: boolean }) => (
  <span className={big ? "flex h-[21px] w-[21px] items-center justify-center rounded-[2px] border border-[#8b8c90] bg-[#f4f4f4]" : "flex h-[14px] w-[14px] items-center justify-center rounded-[3px] border border-[#77787c] bg-[#fafafa]"}>
    <WinGlyph k={k} />
  </span>
);
const Copy = () => <Svg s={16}><path d="M2 6h7l3 3v12H2z" fill="#ddd" stroke="#444" strokeWidth="1.600" /><path d="M9 2h8l4 4v13h-9V9L9 6z" fill="#eee" stroke="#444" strokeWidth="1.600" /></Svg>;
const Paste = () => <Svg s={16}><path d="M2 3h14v18H2z" fill="#9a9a9a" stroke="#777" strokeWidth="1.500" /><path d="M6 1h6v4H6z" fill="#bbb" stroke="#777" /><path d="M10 8h7l5 5v9H10z" fill="#ddd" stroke="#888" strokeWidth="1.500" /></Svg>;
const Reload = () => <Svg s={16}><path d="M3 11C3 2 14-1 19 5l3-3v9h-9l3-3c-4-3-8-1-9 3zM21 13c0 9-11 12-16 6l-3 3v-9h9l-3 3c4 3 8 1 9-3z" fill="#4f9ad8" stroke="#2a69a5" /></Svg>;
const Gear = () => (
  <Svg s={18}>
    <circle cx="12" cy="12" r="9.800" stroke="#9aa5b0" strokeWidth="3" strokeDasharray="4.700 3" /><circle cx="12" cy="12" r="8.300" fill="#eef2f5" stroke="#9ea9b4" /><circle cx="12" cy="12" r="2.600" fill="#fff" stroke="#8e9aa6" strokeWidth="1.500" />
  </Svg>
);
const Heart = () => <Svg s={17}><path d="M2 4h7l2 3h9v13H2z" fill="#f6dc8c" stroke="#b59a4a" /><path d="M13 22c-7-6-7-10-4-11 2-1 4 1 4 2 1-2 3-3 5-2 4 2 1 7-5 11z" fill="#d4141c" stroke="#8a0d12" /></Svg>;
const Points = () => (
  <svg width="17" height="16" viewBox="0 0 17 16" fill="#f3c21c" stroke="#a8851a" strokeWidth=".8">
    {[[3.500, 2.500], [11.500, 4.500], [4, 9], [13.500, 12.500]].map(([x, y]) => <ellipse key={x} cx={x} cy={y} rx="2.600" ry="2.200" />)}
  </svg>
);
const Node = () => <svg width="8" height="8" viewBox="0 0 8 8" className="block shrink-0"><path d="M3 1.500h2L6.500 3v2L5 6.500H3L1.500 5V3z" fill="#fbd2a6" stroke="#1a0e08" strokeWidth="1.100" /></svg>;

/* ---------- shared widgets ---------- */

const DOTS_H = "h-[5px] bg-[radial-gradient(circle,#c3c3c3_0.8px,transparent_1.1px)] bg-[length:5px_5px]";
const Handle = () => (
  <span className="h-[29px] w-[6px] shrink-0 bg-[linear-gradient(135deg,#c4c4c4_30%,#ffffff_31%,#ffffff_45%,transparent_46%)] bg-[length:3px_4px]" />
);
const Cell = ({ w = "w-[34px]", on, children }: Kids & { w?: string; on?: boolean }) => (
  <span className={`flex h-[34px] shrink-0 items-center justify-center ${w} ${on ? "rounded-[3px] border border-[#85868a] bg-linear-to-b from-[#b9bac0] to-[#cdced4]" : ""}`}>{children}</span>
);
const Sep = ({ h = "h-[30px]" }: { h?: string }) => <span className={`mr-px w-px shrink-0 bg-[#b8b8b8] ${h}`} />;
const Caret = ({ up, c = "#000" }: { up?: boolean; c?: string }) => (
  <svg width="8" height="5" viewBox="0 0 8 5" className="block"><path d={up ? "M0 5L4 0l4 5z" : "M0 0h8L4 5z"} fill={c} /></svg>
);
function Combo({ w, off, focus, children }: Kids & { w: string; off?: boolean; focus?: boolean }) {
  return (
    <span className={`flex h-[22px] shrink-0 overflow-hidden rounded-[3px] border border-[#87888c] bg-linear-to-b from-[#e4e5e9] to-[#cfd0d6] ${w}`}>
      <span className={`flex min-w-0 flex-1 items-center whitespace-nowrap ${focus ? "m-px border border-dotted border-black pl-[2px]" : "pl-1"}`}>{children}</span>
      <span className="flex w-[16px] items-center justify-center border-l border-[#9a9ba0]"><Caret c={off ? "#808080" : "#000"} /></span>
    </span>
  );
}

/* ---------- desktop chrome ---------- */

function TopBar() {
  return (
    <div className="flex h-[27px] shrink-0 items-center bg-linear-to-b from-[#5a574c] to-[#403e38] font-['Open_Sans',sans-serif] text-[14px] font-bold text-[#dedad2]">
      <span className="w-[85px] pl-[12px] tracking-[0.3px]">Activités</span>
      <span className="flex flex-1 items-center">
        <span className="flex w-[33px] pl-[12px]"><Bars s={14} /></span>
        <span className="tracking-[0.25px]">ParaView Client</span>
        <span className="ml-[5px]"><svg width="10" height="6" viewBox="0 0 10 6" className="block"><path d="M0 0h10L5 6z" fill="#c9c6bf" /></svg></span>
      </span>
      <span className="flex w-[72px] items-center whitespace-nowrap"><span className="text-[14px] tracking-[-0.1px]">mar. 00:19</span><i className="ml-[5px] h-[7px] w-[7px] shrink-0 rounded-full bg-[#d8d4cc]" /></span>
      <span className="flex flex-1 items-center justify-end pr-[15px]">
        <svg width="14" height="14" viewBox="0 0 14 14" fill="none" stroke="#d5d2ca" strokeWidth="1.500"><path d="M.5 4.500c4-3.500 9-3.500 13 0" stroke="#86837b" /><path d="M2.500 7c3-2.500 6-2.500 9 0M4.500 9.500c2-1.500 3-1.500 5 0" /><circle cx="7" cy="12" r="1.300" fill="#d5d2ca" /></svg>
        <svg width="16" height="14" viewBox="0 0 16 14" className="ml-[12px]" fill="none" stroke="#d5d2ca" strokeWidth="1.500"><path d="M.5 4.500h3l4-3.500v12l-4-3.500h-3z" fill="#d5d2ca" stroke="none" /><path d="M9 4.500q2 2.500 0 5M11 2.500q3.500 4.500 0 9" /><path d="M13.500 1q3 6 0 12" stroke="#86837b" /></svg>
        <svg width="12" height="16" viewBox="0 0 12 16" className="ml-[15px]" fill="none"><path d="M1 3h3V1h4v2h3v12H1z" stroke="#9b988f" strokeWidth="1.600" /><path d="M7.500 4L3 9h2.500L4.500 13 9 8H6.500z" fill="#e5e2da" /></svg>
        <svg width="10" height="6" viewBox="0 0 10 6" className="ml-[12px]"><path d="M0 0h10L5 6z" fill="#d5d2ca" /></svg>
      </span>
    </div>
  );
}

const Bars = ({ s }: { s: number }) => (
  <svg width={s} height={s} viewBox="0 0 44 40" className="block">
    {[["#c6202c", "#f05a5a", 0], ["#1f9440", "#5ccf74", 13], ["#12549c", "#4a8ad0", 26]].map(([a, b, x]) => (
      <g key={a as string} transform={`translate(${x} 0)`}><path d="M8 5h10L10 37H1z" fill={a as string} /><path d="M10 6h4L7 36H3z" fill={b as string} opacity=".4" /></g>
    ))}
  </svg>
);

const dock: { id: string; dot?: boolean; art: React.ReactNode }[] = [
  { id: "firefox", dot: true, art: (<g>
    <circle cx="24" cy="25" r="20" fill="#ff8a16" /><path d="M6 14C0 28 6 45 24 45c10 0 17-5 20-14-6 8-16 10-24 5C11 31 10 20 16 12l-6 2V6z" fill="#f5304e" />
    <circle cx="24" cy="22" r="11" fill="#1470e0" /><path d="M14 13c2-4 8-7 13-6l-3 7z" fill="#27a8f5" /><path d="M13 16l8-1 4 3-4 4 2 3 7 1c-2 5-9 7-14 2-3-3-4-8-3-12z" fill="#ff6a22" />
    <path d="M32 1c8 5 14 14 13 25-1 10-9 17-16 16 6-5 7-12 4-19-2-7-6-14-1-22z" fill="#ffd83a" /></g>) },
  { id: "mfe", art: (<g>
    <circle cx="24" cy="25" r="20" fill="#1437e0" /><path d="M24 5a20 20 0 0 1 19 26L12 9A20 20 0 0 1 24 5z" fill="#0f55ff" />
    <g fill="#000" fontFamily="DejaVu Sans, sans-serif" fontWeight="bold" fontStyle="italic"><text x="0" y="25" fontSize="30" textLength="30" lengthAdjust="spacingAndGlyphs">M</text><text x="17" y="48" fontSize="25" textLength="30" lengthAdjust="spacingAndGlyphs">FE</text></g></g>) },
  { id: "rhythmbox", art: (<g>
    <path d="M5 10c-6 10-6 18 0 28M43 10c6 10 6 18 0 28M9 12c-4 8-4 16 0 24M39 12c4 8 4 16 0 24" stroke="#41597c" strokeWidth="1.500" fill="none" />
    <rect x="11" y="3" width="26" height="42" rx="5" fill="#eceae6" /><path d="M13 4h22l2 8H11z" fill="#fff" /><circle cx="24" cy="22" r="10" fill="#333" /><circle cx="24" cy="22" r="7" fill="#e8bc28" /><circle cx="24" cy="22" r="3.500" fill="#222" /><circle cx="31" cy="38" r="3" fill="#fff" stroke="#ccc" /></g>) },
  { id: "help", art: (<g><ellipse cx="24" cy="42" rx="17" ry="4" fill="#0003" /><circle cx="24" cy="24" r="20" fill="#3b7dbd" /><path d="M5 20a20 20 0 0 1 38 0z" fill="#5a94d2" /><path d="M17 18c0-10 14-10 14-2 0 6-7 6-7 13" stroke="#fff" strokeWidth="4" fill="none" /><circle cx="24" cy="36" r="2.800" fill="#fff" /></g>) },
  { id: "files", art: (<g><path d="M5 3h38l2 4v38H3V7z" fill="#c9c9c7" /><path d="M6 11h36v10H6z" fill="#2e2620" /><path d="M8 13h32v8H8z" fill="#e8762c" /><path d="M7 16h34v3H7z" fill="#fbe3c0" /><path d="M5 20h38v24H5z" fill="#a9a9a7" /><path d="M5 20h38v8L5 40z" fill="#bcbcba" /><rect x="17" y="28" width="14" height="11" rx="2" fill="#b4b4b2" stroke="#d8d8d6" /><rect x="19.500" y="31" width="9" height="5.500" fill="#eee" stroke="#555" /></g>) },
  { id: "writer", art: (<g><path d="M4 2c0-1 1-2 2-2h22l16 15v31c0 1-1 2-2 2H6c-1 0-2-1-2-2z" fill="#0c5789" /><path d="M32 0h12v12z" fill="#1272b0" /><path d="M7 3h19l14 15v27H7z" fill="#f1f1f1" /><g stroke="#0c4f7c" strokeWidth="2"><path d="M12 19h8M12 23h8M12 27h8M12 31h24M12 35h24M12 39h18" /></g><rect x="22" y="18" width="14" height="9.500" fill="#6ab5e8" stroke="#0c4f7c" /><path d="M23 27l4-5 3 3 2-2 4 4z" fill="#333" /></g>) },
  { id: "software", art: (<g><path d="M3 10l3-4h36l3 4z" fill="#c34a1c" /><path d="M3 9h42v36H3z" fill="#ee6f2d" /><path d="M3 9h42L3 36z" fill="#f08850" opacity=".5" /><path d="M19 13V6c0-6 10-6 10 0v7" stroke="#d8502a" strokeWidth="3" fill="none" /><path d="M16 38l8-18 8 18" stroke="#fff" strokeWidth="3.800" fill="none" /><path d="M16 32.500h17" stroke="#fff" strokeWidth="4" strokeLinecap="round" /><path d="M17 32.500h9" stroke="#ee6f2d" strokeWidth="1.500" /></g>) },
  { id: "chrome", art: (<g><circle cx="24" cy="24" r="22" fill="#fdce3c" /><path d="M5 13a22 22 0 0 1 39 2H24L14 30z" fill="#dc4437" /><path d="M4.500 13.500A22 22 0 0 0 22 46l10-16H14z" fill="#119e58" /><circle cx="24" cy="24" r="10.500" fill="#fff" /><circle cx="24" cy="24" r="8" fill="#4286f5" /></g>) },
  { id: "terminal", dot: true, art: (<g><rect x="1" y="6" width="46" height="37" fill="#c8c8c8" /><rect x="4" y="9" width="40" height="31" fill="#2b2c2c" stroke="#111" /><path d="M5 10h38L5 34z" fill="#484a4a" /><path d="M9 15l6 4-6 4M18 27h8" stroke="#fff" strokeWidth="2.200" fill="none" /></g>) },
  { id: "sublime", dot: true, art: (<g><rect width="48" height="48" rx="3" fill="#4a4946" /><path d="M12 16l24-8v9L20 22l16 5v10L12 40v-9l15-4-15-5z" fill="#ff9720" /></g>) },
  { id: "dolphin", art: (<g><path d="M0 28C3 17 12 13 24 14c3-3 7-4 12-4l-3 5c7 3 12 11 14 23-5-9-12-14-21-16 0 3 2 6 5 8-5 0-10-3-13-7-7-1-12 1-18 5z" fill="#27a9ea" /><path d="M3 22c8-5 20-6 30-2-10-1-20-1-30 4z" fill="#8fdcff" /></g>) },
  { id: "gamepad", art: (<g><circle cx="24" cy="24" r="20" fill="#9c8078" /><circle cx="26" cy="26" r="16" fill="#57413c" stroke="#c4aaa0" strokeWidth="4" /><ellipse cx="37" cy="12" rx="11" ry="7" fill="#b09a90" transform="rotate(25 37 12)" /><path d="M12 30l4-10 8-2 20 8 2 6-4 10-14 5-14-9z" fill="#f5b10e" /><path d="M12 30l14-9 18 8-14 8z" fill="#1b1b1b" /><path d="M12 30v6l18 8 14-9v-6l-14 8z" fill="#2b2b2b" /><path d="M21 2h8l-2 11v15h-5V13z" fill="#222" /><circle cx="45" cy="14" r="1.800" fill="#222" /><circle cx="38" cy="9" r="1.300" fill="#222" /></g>) },
];

function Dock() {
  return (
    <aside className="flex w-[67px] shrink-0 flex-col bg-linear-to-b from-[#53373b] via-[#4a343b] to-[#3d302f]">
      {dock.map((d) => (
        <div key={d.id} className="relative flex h-[64px] items-center justify-center pr-[2px]">
          {d.dot && <i className="absolute left-[2px] top-[29px] h-[5px] w-[5px] rounded-full bg-[#e4572a]" />}
          <svg width="48" height="48" viewBox="0 0 48 48" className="overflow-visible">{d.art}</svg>
        </div>
      ))}
      <div className="relative ml-[2px] mr-[3px] flex h-[63px] items-center justify-center rounded-[3px] bg-[#6a5358]">
        <i className="absolute left-0 top-[29px] h-[5px] w-[5px] rounded-full bg-[#e4572a]" />
        <Bars s={44} />
      </div>
      <div className="mt-auto mr-[2px] grid grid-cols-3 gap-[6px] self-center pb-[17px]">
        {Array.from({ length: 9 }, (_, i) => <i key={i} className="h-[6px] w-[6px] rounded-full bg-[#f0efed]" />)}
      </div>
    </aside>
  );
}

function TitleBar() {
  return (
    <div className="flex h-[28px] shrink-0 items-center bg-linear-to-b from-[#393833] to-[#4b4943] pr-[5px] font-['Open_Sans',sans-serif] text-[14px] font-bold text-[#e0dcd4]">
      <span className="flex-1" />
      <span className="w-[370px] whitespace-nowrap pl-[4px] text-center tracking-[0.17px]">ParaView 5.4.1 64-bit (Legacy Rendering Backend)</span>
      <span className="flex flex-1 justify-end gap-[4px]">
        {["M4 8.500h8", "M4.500 5.500h7v5h-7z", "M5.500 5.500l5 5M10.500 5.500l-5 5"].map((p, i) => (
          <svg key={p} width="16" height="16" viewBox="0 0 16 16" fill="none"><circle cx="8" cy="8" r="7.800" fill={i === 2 ? "#ee5a2a" : "#7b7972"} /><path d={p} stroke={i === 2 ? "#4a1a08" : "#3a3934"} strokeWidth="1.300" /></svg>
        ))}
      </span>
    </div>
  );
}

const menus: [string, string][] = [["File", "w-[36px]"], ["Edit", "w-[39px]"], ["View", "w-[45px]"], ["Sources", "w-[64px]"], ["Filters", "w-[52px]"], ["Tools", "w-[46px]"], ["Catalyst", "w-[66px]"], ["Macros", "w-[59px]"], ["Help", "w-[40px]"]];
const U = ({ t }: { t: string }) => <span><span className="underline underline-offset-2">{t[0]}</span>{t.slice(1)}</span>;

const ROW = "flex shrink-0 items-center border-b border-[#b6b6b6] pl-[5px] pt-px shadow-[inset_0_1px_0_#fbfbfb]";

function Toolbars() {
  return (
    <>
      <div className="flex h-[25px] shrink-0 items-center border-b border-[#b6b6b6] pl-[11px] pt-[2px]">
        {menus.map(([m, w]) => <span key={m} className={w}><U t={m} /></span>)}
      </div>
      <div className={`h-[39px] ${ROW}`}>
        <Handle />
        <span className="w-px" />
        <Cell><Folder /></Cell><Cell><Folder save /></Cell>
        <Sep />
        <Cell><Server /></Cell><Cell><Server off /></Cell>
        <Sep />
        <Cell><Undo /></Cell><Cell><Undo redo /></Cell>
        <Sep />
        <Cell><ExtractSel /></Cell><Cell><LoadColor /></Cell><Cell><Palette /></Cell>
        <span className="w-[10px]" /><Handle />
        {[0, 1, 2, 3, 4, 5].map((k) => <Cell key={k}><Play k={k} /></Cell>)}
        <span className="w-[8px]" /><Handle />
        <span className="w-[36px] whitespace-nowrap">Time:</span>
        <span className="flex h-[22px] w-[127px] items-center rounded-[3px] border border-[#87888c] bg-white pl-[4px]">0</span>
        <span className="ml-[2px] flex h-[22px] w-[53px] overflow-hidden rounded-[3px] border border-[#87888c] text-[#c4c4c4]">
          <span className="flex-1 pl-[4px] leading-[20px]">0</span>
          <span className="flex w-[16px] flex-col border-l border-[#87888c] bg-linear-to-b from-[#e4e5e9] to-[#cfd0d6]">
            <span className="flex flex-1 items-center justify-center border-b border-[#87888c]"><Caret up c="#777" /></span>
            <span className="flex flex-1 items-center justify-center"><Caret c="#777" /></span>
          </span>
        </span>
      </div>
      <div className={`h-[39px] ${ROW}`}>
        <Handle />
        <span className="w-px" />
        <Cell on><Legend /></Cell><Cell><EditMap /></Cell><Cell><Rescale k="" /></Cell><Cell><Rescale k="c" /></Cell><Cell><Rescale k="t" grey /></Cell><Cell><Rescale k="e" /></Cell>
        <Combo w="w-[153px]"><span className="ml-[5px] mr-[7px]"><Node /></span>Partie Imaginaire</Combo>
        <span className="w-[4px]" /><Combo w="w-[79px]" off />
        <span className="w-[9px]" /><Handle />
        <Combo w="w-[150px]">Surface</Combo>
        <span className="w-[9px]" /><Handle />
        <Cell><ResetCam /></Cell><Cell><ZoomData /></Cell><Cell><ZoomBox /></Cell>
        <Cell><AxisView t="+X" up={G} side="#f5b91c" /></Cell><Cell><AxisView t="-X" up={G} side="#f5b91c" /></Cell>
        <Cell><AxisView t="+Y" up={G} side="#e23f2c" /></Cell><Cell><AxisView t="-Y" up={G} side="#e23f2c" /></Cell>
        <Cell><AxisView t="+Z" up="#f5b91c" side="#e23f2c" /></Cell><Cell><AxisView t="-Z" up="#f5b91c" side="#e23f2c" /></Cell>
        <Cell><Rot t="+90" /></Cell><Cell><Rot t="-90" /></Cell>
        <span className="w-[9px]" /><Handle />
        <Cell on><Orient /></Cell><Cell><Center k={0} /></Cell><Cell><Center k={1} /></Cell><Cell><Center k={2} /></Cell>
        <span className="w-[9px]" /><Handle />
      </div>
      <div className={`h-[38px] ${ROW}`}>
        <Handle />
        {[<Calc />, <Contour />, <Cube fill="#5ea845" />, <Cube fill="#8cc873" kind={1} />, <Cube fill="#77bb5c" kind={2} />, <Cube fill="#d4d4d4" kind={3} grey />, <Glyph />, <Stream />, <Warp />, <Group />, <Group ex />].map((ic, i) => <Cell key={i} w="w-[35px]">{ic}</Cell>)}
        <span className="w-[8px]" /><Handle />
        {[<SelQuery />, <PlotTime />, <PlotLine />, <PlotTime sel />, <Probe />].map((ic, i) => <Cell key={i} w="w-[35px]">{ic}</Cell>)}
      </div>
    </>
  );
}

/* ---------- left panels ---------- */

function PanelTitle({ t, h }: { t: string; h: string }) {
  return (
    <div className={`flex shrink-0 items-center gap-px pl-[3px] pr-px ${h}`}>
      <span className={`flex-1 ${DOTS_H}`} /><span className="px-[10px] text-[11px]">{t}</span><span className={`mr-[3px] flex-1 ${DOTS_H}`} />
      <WinBtn k="r" /><WinBtn k="x" />
    </div>
  );
}
const SectionHead = ({ t }: { t: string }) => (
  <div className="flex h-[27px] w-[245px] shrink-0 gap-[4px]">
    <span className="flex w-[143px] items-center rounded-[3px] border border-[#8b8c90] pl-[11px] shadow-[inset_1px_1px_0_#fbfbfb]">
      <i className="h-[5px] w-[13px] border border-[#26307a] bg-[#8fa3dc]" />
      <b className="ml-[8px] w-[99px] overflow-hidden whitespace-nowrap text-[12px]">{t}</b>
    </span>
    <span className={`w-[30px] ${BTN}`}><Copy /></span><span className={`w-[30px] ${BTN}`}><Paste /></span><span className={`w-[30px] ${BTN}`}><Reload /></span>
  </div>
);
const Check = ({ on }: { on?: boolean }) => (
  <span className="flex h-[13px] w-[13px] shrink-0 items-center justify-center border border-[#808185] bg-white">
    {on && <svg width="9" height="9" viewBox="0 0 9 9"><path d="M1.500 1.500l6 6M7.500 1.500l-6 6" stroke="#000" strokeWidth="2.600" /></svg>}
  </span>
);
const Caption = ({ t }: { t: string }) => <div className="h-[19px] shrink-0 border-b border-[#55565a] text-[12px] font-bold leading-[22px]">{t}</div>;
const Slider = ({ at }: { at: string }) => (
  <span className="relative mt-[8px] h-[4px] w-[56px] rounded-sm border border-[#8b8c90] bg-[#f5f5f5]">
    <svg width="11" height="16" viewBox="0 0 11 16" className={`absolute -top-[7px] ${at}`}><path d="M.5 2.500q0-2 2-2h6q2 0 2 2v8L5.500 15l-5-4.500z" fill="#dddee2" stroke="#808185" /></svg>
  </span>
);
const Arrow = ({ r }: { r: string }) => (
  <span className="flex h-[16px] w-[16px] shrink-0 items-center justify-center rounded-[2px] border border-[#8b8c90] bg-linear-to-b from-[#efeff1] to-[#d2d3d8]">
    <svg width="8" height="5" viewBox="0 0 8 5" className={r}><path d="M0 5L4 0l4 5z" /></svg>
  </span>
);
const GRIP = "bg-[radial-gradient(circle,#a8a8ac_0.7px,transparent_1px)] bg-[length:4px_4px]";
const TROUGH = "bg-[repeating-conic-gradient(#e2e2e2_0_25%,#f6f6f6_0_50%)] bg-[length:2px_2px]";

function PropertyPanel() {
  return (
    <div className="flex h-[414px] w-[261px] shrink-0">
      <div className="flex w-[245px] flex-col overflow-hidden">
        <SectionHead t="Properties (rendu_maillage.vtu)" />
        <div className="mt-[7px] flex h-[83px] w-[260px] shrink-0 flex-col border-2 border-[#88898d] bg-white">
          <div className="flex h-[24px] items-center gap-[2px] border-b border-[#88898d] bg-linear-to-b from-[#e2e3e7] to-[#cbccd2] pl-[4px] pt-px"><Check on />Cell/Point Array Status</div>
          <div className="flex h-[16px] items-end pl-[3px]"><Check on /><span className="ml-[6px] mr-[5px]"><Points /></span><span className="leading-[15px]">Partie Réelle</span></div>
          <div className="flex h-[16px] items-end pl-[3px]"><Check on /><span className="ml-[6px] mr-[5px]"><Points /></span><span className="leading-[15px]">Partie Imaginaire</span></div>
        </div>
        <div className="h-[5px] shrink-0" />
        <SectionHead t="Display (UnstructuredGrid)" />
        <div className="mt-[7px] flex h-[22px] w-[320px] shrink-0"><span className="w-[116px] leading-[16px]">Representation</span><Combo w="w-[160px]">Surface</Combo></div>
        <div className="h-[4px] shrink-0" />
        <Caption t="Coloring" />
        <div className="mt-[6px] flex w-[320px] shrink-0 gap-[5px]">
          <Combo w="w-[152px]" focus><span className="ml-[5px] mr-[7px]"><Node /></span>Partie Imaginaire</Combo><Combo w="w-[120px]" />
        </div>
        <div className="mt-[4px] flex h-[26px] shrink-0 gap-[4px]">
          <span className={`w-[75px] gap-[4px] pr-[2px] ${BTN}`}><EditMap s={16} />Edit</span>
          <span className={`w-[30px] ${BTN}`}><Rescale k="" s={17} /></span><span className={`w-[30px] ${BTN}`}><Rescale k="c" s={17} /></span><span className={`w-[30px] ${BTN}`}><Rescale k="t" s={17} /></span><span className={`w-[30px] ${BTN}`}><Heart /></span>
          <span className="flex w-[30px] items-center justify-center rounded-[3px] border border-[#85868a] bg-[#bfc0c6]"><Legend s={16} /></span>
        </div>
        <div className="h-[5px] shrink-0" />
        <Caption t="Styling" />
        <div className="mt-[6px] flex h-[22px] w-[320px] shrink-0"><span className="w-[116px] leading-[16px]">Opacity</span><Slider at="right-0" /><span className="ml-[7px] flex w-[90px] items-center rounded-[3px] border border-[#87888c] bg-white pl-[4px]">1</span></div>
        <div className="h-[4px] shrink-0" />
        <Caption t="Lighting" />
        <div className="mt-[6px] flex h-[22px] w-[320px] shrink-0"><span className="w-[116px] leading-[16px]">Specular</span><Slider at="left-0" /><span className="ml-[7px] flex w-[90px] items-center rounded-[3px] border border-[#87888c] bg-white pl-[4px]">0</span></div>
        <div className="h-[4px] shrink-0" />
        <Caption t="Miscellaneous" />
        <div className="mt-[9px] flex items-center gap-[5px]"><Check />Use Data Partitions</div>
      </div>
      <div className={`flex w-[16px] flex-col ${TROUGH}`}>
        <Arrow r="" />
        <span className="flex h-[194px] items-center justify-center rounded-[2px] border border-[#8b8c90] bg-linear-to-r from-[#eeeff1] to-[#d3d4d9]"><i className={`h-[20px] w-[12px] ${GRIP}`} /></span>
        <span className="flex-1" />
        <Arrow r="" /><Arrow r="rotate-180" />
      </div>
    </div>
  );
}

function LeftDock() {
  return (
    <div className="flex w-[285px] shrink-0 flex-col">
      <div className="w-[279px]">
        <PanelTitle t="Pipeline Browser" h="h-[21px] pb-[3px]" />
        <div className="ml-px flex h-[271px] w-[278px] flex-col rounded-[3px] border-2 border-[#929397] border-b-[#aaa] bg-white">
          <div className="flex h-[24px] items-center pl-[29px]">
            <svg width="10" height="24" viewBox="0 0 10 24"><path d="M5.500 0v5M5.500 21v3" stroke="#555" /><rect x="1" y="5" width="8" height="14" fill="#999" stroke="#222" strokeWidth="1.400" /><path d="M3 8h4M3 11h4" stroke="#111" /></svg>
            <span className="ml-[6px]">builtin:</span>
          </div>
          <div className="mt-px flex h-[18px] items-center pl-[3px]">
            <svg width="14" height="10" viewBox="0 0 14 10"><path d="M.5 5c4-5 9-5 13 0-4 5-9 5-13 0z" fill="#dfe6ee" stroke="#111" /><circle cx="7" cy="4.800" r="3" fill="#1c2430" /></svg>
            <span className="ml-[8px] flex h-[18px] w-[140px] items-center border border-dotted border-[#9c7a58] bg-[#6a92bd] text-white">
              <svg width="16" height="16" viewBox="0 0 16 16"><path d="M1 3l8-2 6 3v9l-5 2-9-2z" fill="#5ba347" stroke="#3d6e30" strokeWidth=".8" /><path d="M1 3l5 2v10l-5-2z" fill="#3f7d32" /><path d="M1 3l8-2 6 3-9 1z" fill="#85c46c" /></svg>
              <span className="ml-[3px]">rendu_maillage.vtu</span>
            </span>
          </div>
        </div>
        <div className="flex h-[6px] items-center justify-center"><span className={`w-[88px] ${DOTS_H}`} /></div>
        <div className="flex h-[22px] items-end">
          <span className="flex h-[22px] w-[87px] items-center justify-center rounded-t-[3px] border border-b-0 border-[#929397]">Properties</span>
          <span className="flex h-[19px] w-[93px] items-center justify-center rounded-tr-[3px] border border-[#929397] bg-linear-to-b from-[#e0e1e5] to-[#c9cad0] pt-px">Information</span>
          <span className="flex-1 border-b border-[#929397]" />
        </div>
        <PanelTitle t="Properties" h="h-[20px]" />
      </div>
      <div className="flex flex-col pl-[9px] pt-[10px]">
        <div className="flex h-[26px] gap-[2px]">
          <span className={`w-[75px] gap-[4px] pr-[2px] text-[#9a9a9a] ${BTN}`}><ExtractSel grey s={16} /><U t="Apply" /></span>
          <span className={`w-[75px] gap-[4px] pr-px text-[#9a9a9a] ${BTN}`}><Svg s={16}><circle cx="12" cy="12" r="10.500" fill="#a8a8a8" stroke="#999" /><circle cx="12" cy="12" r="6" stroke="#ddd" strokeWidth="2" /><path d="M7.500 16.500l9-9" stroke="#ddd" strokeWidth="2" /></Svg><U t="Reset" /></span>
          <span className={`w-[75px] gap-[5px] ${BTN}`}><Svg s={14}><path d="M3 3l18 18M21 3L3 21" stroke="#c8341c" strokeWidth="6.500" /><path d="M4 4l16 16M20 4L4 20" stroke="#f0603c" strokeWidth="4" /></Svg><U t="Delete" /></span>
          <span className={`w-[30px] text-[16px] font-bold text-[#2b93d8] ${BTN}`}>?</span>
        </div>
        <div className="mt-[9px] flex h-[25px] items-center gap-[2px]">
          <span className="flex h-[21px] w-[233px] items-center rounded-[3px] border border-[#87888c] bg-white pl-[4px] text-[#8a8a8a]">Search ... (use Esc to clear text)</span>
          <span className="flex h-[25px] w-[26px] items-center justify-center rounded-[3px] border border-[#8b8c90] bg-[#f6f6f7]"><Gear /></span>
        </div>
        <div className="h-[6px]" />
        <PropertyPanel />
        <div className={`flex h-[16px] w-[245px] ${TROUGH}`}>
          <Arrow r="-rotate-90" />
          <span className="flex w-[172px] items-center justify-center rounded-[2px] border border-[#8b8c90] bg-linear-to-b from-[#eeeff1] to-[#d3d4d9]"><i className={`h-[12px] w-[20px] ${GRIP}`} /></span>
          <span className="flex-1" />
          <Arrow r="-rotate-90" /><Arrow r="rotate-90" />
        </div>
      </div>
    </div>
  );
}

/* ---------- main area ---------- */

function MainArea() {
  const c = "w-[22px]";
  return (
    <div className="flex min-w-0 flex-1 flex-col">
      <div className="flex h-[22px] items-end">
        <span className="flex h-[22px] w-[114px] items-center rounded-t-[3px] border border-b-0 border-[#929397] pl-[10px]"><WinGlyph k="max" /><span className="ml-[5px] mr-[4px]">Layout #1</span><WinGlyph k="x" /></span>
        <span className="flex h-[18px] w-[35px] items-center justify-center rounded-t-[3px] border border-[#929397] bg-linear-to-b from-[#e0e1e5] to-[#c9cad0] text-[14px]">+</span>
        <span className="h-px flex-1 bg-[#8c8c8c]" />
      </div>
      <div className="flex flex-1 flex-col border-x border-b border-[#8c8c8c] pl-px">
        <div className="flex h-[23px] items-center">
          <Cell w={c}><CamUndo /></Cell><Cell w={c}><CamUndo grey /></Cell><Sep h="h-[16px]" />
          <Cell w={c}><span className="font-['Open_Sans',sans-serif] text-[10px] font-semibold text-[#444]">2D</span></Cell><Cell w={c}><CamAdj /></Cell><Sep h="h-[16px]" />
          {["plus", "minus", "pm"].map((k) => <Cell key={k} w={c}><Small k={k} /></Cell>)}
          <Sep h="h-[16px]" />
          {["cell", "pt", "blk", "fr", "pc", "pp", "blks", "tri", "dots", "q1", "q2"].map((k) => <Cell key={k} w={c}><Small k={k} /></Cell>)}
          <Cell w={c}><Svg s={16}><circle cx="12" cy="12" r="10.500" fill="#999" stroke="#8a8a8a" strokeWidth="2" /><circle cx="12" cy="12" r="8" fill="#999" stroke="#eee" strokeWidth="1.500" /><path d="M8.500 8.500l7 7M15.500 8.500l-7 7" stroke="#fff" strokeWidth="2.500" /></Svg></Cell>
          <b className="ml-auto mr-[11px] border-b border-black text-[12px] leading-[14px]">RenderView1</b>
          <span className="flex gap-[2px] pr-[2px]">{["v", "h", "max", "r", "x"].map((k) => <WinBtn key={k} k={k} big />)}</span>
        </div>
        <div className="mr-px w-[1564px] border-2 border-[#0000f5]"><div className="border border-[#e6e6ee]"><Viewport /></div></div>
      </div>
    </div>
  );
}

export default function App() {
  return (
    <div className="relative flex h-[1080px] w-[1920px] flex-col overflow-hidden bg-[#efefef] font-['DejaVu_Sans',sans-serif] text-[12px] leading-[15px] text-[#141414]">
      <svg width="0" height="0" className="absolute"><Rainbow /></svg>
      <TopBar />
      <div className="flex min-h-0 flex-1">
        <Dock />
        <div className="flex min-w-0 flex-1 flex-col">
          <TitleBar />
          <Toolbars />
          <div className="flex h-[856px] shrink-0 pt-px">
            <LeftDock />
            <MainArea />
          </div>
          <div className="flex flex-1 items-center pl-[6px] pr-[5px]">
            <span className="w-[919px]">Toggle Color Legend Visibility</span>
            <span className="flex h-[23px] w-[24px] items-center justify-center rounded-[3px] border border-[#9a9a9a] bg-[#efefef] shadow-[inset_1px_1px_0_#fff]"><Svg s={12}><rect x="1" y="1" width="22" height="22" rx="4" fill="#999" /><path d="M7 7l10 10M17 7L7 17" stroke="#fff" strokeWidth="3" /></Svg></span>
            <span className="h-[23px] flex-1 rounded-[3px] border border-[#858585]" />
          </div>
        </div>
      </div>
      <div className="absolute left-[301px] top-[877px] flex h-[20px] w-[147px] items-center justify-center whitespace-nowrap border border-black bg-[#ffffdc] shadow-[2px_5px_14px_rgba(0,0,0,0.35)]">Show/hide color legend</div>
    </div>
  );
}
